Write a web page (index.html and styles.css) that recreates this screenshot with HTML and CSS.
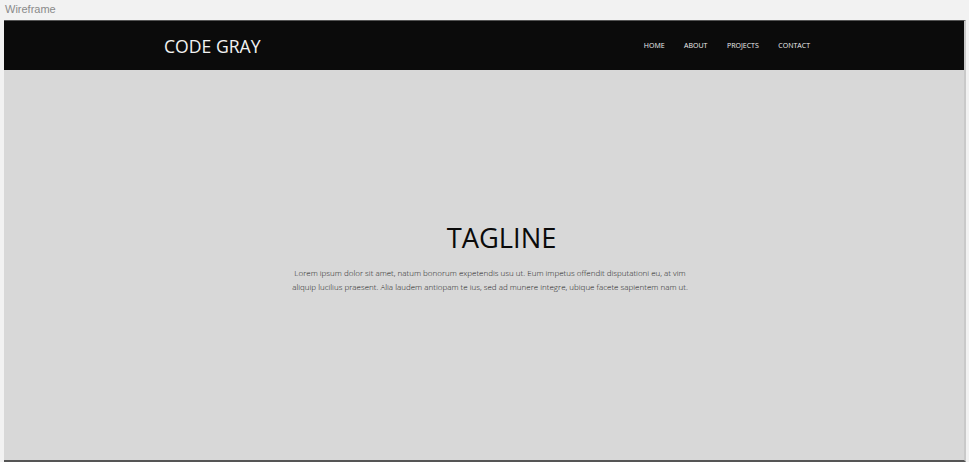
FILE: index.html
```html
<!DOCTYPE html>
<html>
<head>
<meta charset="utf-8">
<link rel="stylesheet" href="styles.css">
</head>
<body>
<div class="titlebar">Wireframe</div>
<div class="frame">
  <header class="header">
    <div class="logo">CODE GRAY</div>
    <nav class="nav">
      <a class="nav-item">HOME</a>
      <a class="nav-item">ABOUT</a>
      <a class="nav-item">PROJECTS</a>
      <a class="nav-item">CONTACT</a>
    </nav>
  </header>
  <main class="hero">
    <h1 class="tagline">TAGLINE</h1>
    <p class="lead">Lorem ipsum dolor sit amet, natum bonorum expetendis usu ut. Eum impetus offendit disputationi eu, at vim aliquip lucilius praesent. Alia laudem antiopam te ius, sed ad munere integre, ubique facete sapientem nam ut.</p>
  </main>
</div>
</body>
</html>
```

FILE: styles.css
```css
html, body {
  margin: 0;
  padding: 0;
  background: #f2f2f2;
  height: 462px;
  overflow: hidden;
}
.titlebar {
  height: 20px;
  padding-left: 5px;
  font-family: "Liberation Sans", Arial, sans-serif;
  font-size: 11px;
  line-height: 19px;
  color: #8a8a8a;
  box-sizing: border-box;
}
.frame {
  margin-left: 4px;
  width: 962px;
  height: 442px;
  box-sizing: border-box;
  border-top: 1px solid #555;
  border-right: 2px solid #c9c9c9;
  border-bottom: 2px solid #555;
  display: flex;
  flex-direction: column;
  font-family: "Open Sans", sans-serif;
}
.header {
  height: 49px;
  background: #0b0b0b;
  display: flex;
  align-items: center;
  padding-left: 160px;
  padding-right: 154px;
}
.logo {
  color: #f2f2f2;
  font-size: 17.6px;
  line-height: 20px;
  flex: 1;
}
.nav {
  display: flex;
  gap: 19.5px;
}
.nav-item {
  color: #f0f0f0;
  font-size: 7px;
  line-height: 10px;
}
.hero {
  flex: 1;
  background: #d8d8d8;
  display: flex;
  flex-direction: column;
  align-items: center;
  padding-top: 150px;
}
.tagline {
  margin: 0;
  font-weight: 400;
  font-size: 27.3px;
  line-height: 36px;
  color: #0a0a0a;
  padding-left: 35px;
}
.lead {
  margin: 10px 0 0 12px;
  width: 404px;
  text-align: center;
  font-size: 8px;
  font-weight: 300;
  line-height: 14px;
  color: #222;
}
```
